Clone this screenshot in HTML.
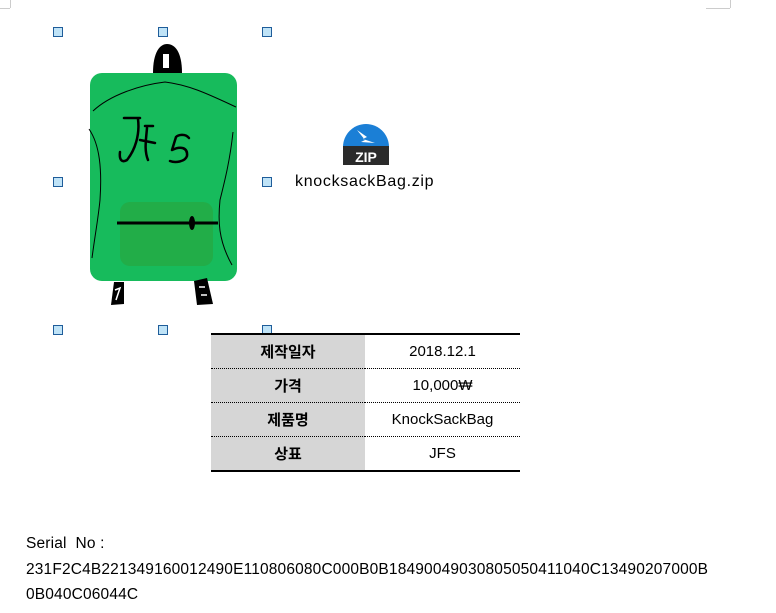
<!DOCTYPE html>
<html><head><meta charset="utf-8"><style>
body{margin:0;width:776px;height:613px;background:#fff;position:relative;overflow:hidden;font-family:"Liberation Sans","Noto Sans CJK KR",sans-serif;color:#000}
.h{position:absolute;width:8px;height:8px;background:#bfe3f7;border:1px solid #1f5d9a}
.t{position:absolute;left:211px;top:333px;width:309px;border-collapse:collapse;font-size:15px}
.t td{height:33px;padding:0;text-align:center;border-bottom:1px dotted #000}
.t tr:first-child td{border-top:2px solid #000}
.t tr:last-child td{border-bottom:2px solid #000}
.t td.l{background:#d6d6d6;width:154px;font-weight:bold}
.s{position:absolute;left:26px;font-size:15.5px;letter-spacing:0.16px}
</style></head><body>
<div style="position:absolute;left:10px;top:0;width:1px;height:8px;background:#ccc"></div>
<div style="position:absolute;left:0;top:8px;width:10px;height:1px;background:#ccc"></div>
<div style="position:absolute;left:730px;top:0;width:1px;height:8px;background:#ccc"></div>
<div style="position:absolute;left:706px;top:8px;width:24px;height:1px;background:#ccc"></div>

<svg style="position:absolute;left:0;top:0" width="300" height="320">
<path d="M153 73 C153 52 160 44 167 44 C175 44 182 52 182 73 Z" fill="#000"/>
<rect x="163" y="54" width="6" height="14" fill="#fff"/>
<rect x="90" y="73" width="147" height="208" rx="12" fill="#17bb5c"/>
<rect x="120" y="202" width="93" height="64" rx="10" fill="#22ad48"/>
<g fill="none" stroke="#000" stroke-width="1">
<path d="M93 111 C110 95 140 85 165 82 C190 85 210 95 236 107"/>
<path d="M89 129 C100 145 102 170 100 200 C98 220 95 235 92 258"/>
<path d="M233 132 C230 160 225 180 220 200 C218 220 218 240 232 265"/>
</g>
<g fill="none" stroke="#000" stroke-width="2.5" stroke-linecap="round" stroke-linejoin="round">
<path d="M124 118 L140 118 M138 119 C140 135 135 150 127 160 C122 163 119 160 120 152"/>
<path d="M145 126 L153 126 M140 140 L155 143 M147 128 C146 140 144 150 148 160"/>
<path d="M189 138 C185 133 178 135 176 137 L172 150 C180 146 188 147 187 156 C185 162 175 163 170 161"/>
</g>
<path d="M117 223 L218 223" stroke="#000" stroke-width="3"/>
<ellipse cx="192" cy="223" rx="3" ry="7" fill="#000"/>
<path d="M114 282 L124 282 L124 304 L111 305 Z" fill="#000"/>
<path d="M115 290 L120 288 L116 300" stroke="#fff" stroke-width="1.5" fill="none"/>
<path d="M194 281 L207 278 L213 304 L197 305 Z" fill="#000"/>
<path d="M199 287 L205 287 M201 295 L207 295" stroke="#fff" stroke-width="1.5"/>
</svg>

<div class="h" style="left:53px;top:27px"></div>
<div class="h" style="left:158px;top:27px"></div>
<div class="h" style="left:262px;top:27px"></div>
<div class="h" style="left:53px;top:177px"></div>
<div class="h" style="left:262px;top:177px"></div>
<div class="h" style="left:53px;top:325px"></div>
<div class="h" style="left:158px;top:325px"></div>
<div class="h" style="left:262px;top:325px"></div>

<svg style="position:absolute;left:343px;top:124px" width="46" height="42">
<path d="M0 23 A23 23 0 0 1 46 23 Z" fill="#1b7fd6"/>
<path d="M14 6 L24 13 L20 15 L32 19 L18 18 L22 16 Z" fill="#fff"/>
<rect x="0" y="22" width="46" height="19" fill="#2b2b2b"/>
<text x="23" y="38" text-anchor="middle" font-family="Liberation Sans" font-weight="bold" font-size="14" fill="#fff">ZIP</text>
</svg>
<div style="position:absolute;left:295px;top:173px;font-size:16px;letter-spacing:0.7px">knocksackBag.zip</div>

<table class="t">
<tr><td class="l">제작일자</td><td>2018.12.1</td></tr>
<tr><td class="l">가격</td><td>10,000₩</td></tr>
<tr><td class="l">제품명</td><td>KnockSackBag</td></tr>
<tr><td class="l">상표</td><td>JFS</td></tr>
</table>

<div class="s" style="top:535px">Serial&nbsp; No :</div>
<div class="s" style="top:561px">231F2C4B221349160012490E110806080C000B0B18490049030805050411040C13490207000B</div>
<div class="s" style="top:586px">0B040C06044C</div>
</body></html>
